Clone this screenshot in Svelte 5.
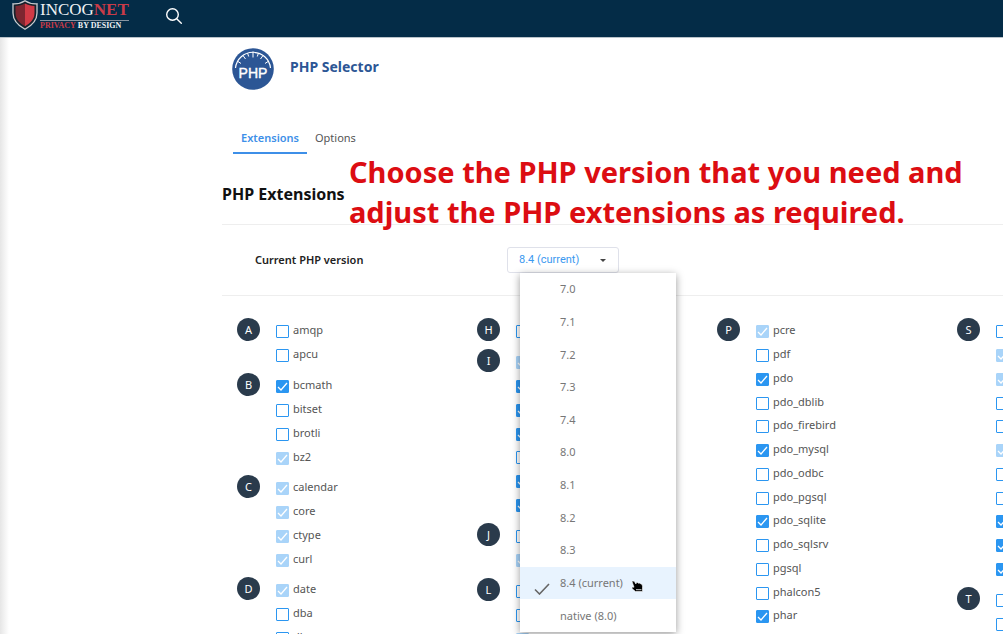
<script>
  // Extension state: 0 = off, 1 = on, 2 = on and locked
  const columns = [
    [
      ['A', [['amqp', 0], ['apcu', 0]]],
      ['B', [['bcmath', 1], ['bitset', 0], ['brotli', 0], ['bz2', 2]]],
      ['C', [['calendar', 2], ['core', 2], ['ctype', 2], ['curl', 2]]],
      ['D', [['date', 2], ['dba', 0], ['dbase', 0]]],
    ],
    [
      ['H', [['http', 0]]],
      ['I', [['iconv', 2], ['igbinary', 1], ['imagick', 1], ['imap', 1], ['inotify', 0], ['intl', 1], ['ioncube_loader', 1]]],
      ['J', [['jsmin', 0], ['json', 2]]],
      ['L', [['ldap', 0], ['leveldb', 0], ['libxml', 2]]],
    ],
    [
      ['P', [
        ['pcre', 2], ['pdf', 0], ['pdo', 1], ['pdo_dblib', 0], ['pdo_firebird', 0], ['pdo_mysql', 1], ['pdo_odbc', 0],
        ['pdo_pgsql', 0], ['pdo_sqlite', 1], ['pdo_sqlsrv', 0], ['pgsql', 0], ['phalcon5', 0], ['phar', 1], ['phpiredis', 0],
      ]],
    ],
    [
      ['S', [
        ['scrypt', 0], ['session', 2], ['simplexml', 2], ['snmp', 0], ['snuffleupagus', 0], ['spl', 2], ['solr', 0],
        ['sourceguardian', 0], ['sqlite3', 1], ['soap', 1], ['sockets', 1],
      ]],
      ['T', [['tideways_xhprof', 0], ['tidy', 0]]],
    ],
  ];
  const versions = ['7.0', '7.1', '7.2', '7.3', '7.4', '8.0', '8.1', '8.2', '8.3', '8.4 (current)', 'native (8.0)'];
  let version = $state('8.4 (current)');
</script>

<div class="page">
  <header>
    <a class="brand" href="#home" aria-label="Incognet, privacy by design">
      <svg class="shield" viewBox="0 0 26 30" aria-hidden="true">
        <path d="M13 .7C9.500 3 5.500 4 1 3.800V13c0 7.500 5 12.500 12 16.300C20 25.500 25 20.500 25 13V3.800C20.500 4 16.500 3 13 .7Z" fill="#17222c" stroke="#c9cdd1" stroke-width="1.300" />
        <path d="M13 3.600C10 5.200 7 6 3.500 6v7c0 6 4 10.200 9.500 13.300Z" fill="#7d2630" />
        <path d="M13 3.600C16 5.200 19 6 22.500 6v7c0 6-4 10.200-9.500 13.300Z" fill="#d13a46" />
      </svg>
      <span class="words">
        <span class="name">INCOG<b>NET</b></span>
        <span class="motto"><b>PRIVACY</b> BY DESIGN</span>
      </span>
    </a>
    <button class="search" aria-label="Search">
      <svg viewBox="0 0 18 18" aria-hidden="true"><circle cx="7.500" cy="7.500" r="5.800" /><path d="M11.700 11.700 16.300 16.300" /></svg>
    </button>
  </header>

  <main>
    <div class="title">
      <svg viewBox="0 0 42 42" aria-hidden="true">
        <circle cx="21" cy="21" r="20.800" fill="#2c5695" />
        <path d="M3.500 20a17.600 17.600 0 0 1 35 0" fill="none" stroke="#fff" stroke-width="1.200" />
        <path d="M6 13.500l3 2M11 7.500l2.500 3.500M15.500 5l1.200 3.500M21 3.500v6M26.500 5l-1.200 3.500M31 7.500l-2.500 3.500M36 13.500l-3 2" stroke="#fff" stroke-width="1" />
        <text x="21" y="30" text-anchor="middle" fill="#fff" stroke="#fff" stroke-width=".4" font-family="Liberation Sans, sans-serif" font-size="14">PHP</text>
      </svg>
      <h1>PHP Selector</h1>
    </div>

    <nav>
      <a class="on" href="#extensions">Extensions</a>
      <a href="#options">Options</a>
    </nav>

    <div class="heading">
      <h2>PHP Extensions</h2>
      <p class="note">Choose the PHP version that you need and<br />adjust the PHP extensions as required.</p>
    </div>

    <div class="current">
      <label for="version">Current PHP version</label>
      <div class="picker">
        <select id="version" bind:value={version}>
          {#each versions as v}<option>{v}</option>{/each}
        </select>
        <svg class="caret" viewBox="0 0 6 3" aria-hidden="true"><path d="M0 0h6L3 3Z" /></svg>
        <ul class="menu" role="listbox" aria-label="PHP versions">
          {#each versions as v}
            <li role="option" aria-selected={v === version} class:chosen={v === version}>
              <button onclick={() => (version = v)}>
                <span class="tick">
                  {#if v === version}
                    <svg viewBox="0 0 16 12" aria-hidden="true"><path d="M1 6.500 5.500 11 15 1" /></svg>
                  {/if}
                </span>
                {v}
              </button>
              {#if v === version}
                <svg class="hand" viewBox="0 0 12 12" aria-hidden="true">
                  <path d="M1 1.500c.8-.8 2-.5 2.500.3L5 4V2.800l1.500-.3 1 .8 1.300-.2.9.9 1.300.3.500 2V11.500H4.500L1 8.500V7l2 .2Z" fill="#000" stroke="#fff" stroke-width=".6" />
                  <path d="M5 9.700h5.500" stroke="#fff" stroke-width=".8" />
                </svg>
              {/if}
            </li>
          {/each}
        </ul>
      </div>
    </div>

    <div class="columns">
      {#each columns as groups}
        <div class="column">
          {#each groups as [letter, items]}
            <section>
              <h3>{letter}</h3>
              <ul>
                {#each items as [name, state]}
                  <li>
                    <label><input type="checkbox" checked={state > 0} disabled={state === 2} />{name}</label>
                  </li>
                {/each}
              </ul>
            </section>
          {/each}
        </div>
      {/each}
    </div>
  </main>
</div>

<style>
  :global(body) { margin: 0; background: #fff; }
  .page {
    min-height: 100vh;
    overflow-x: clip;
    font: 11px/24px "Noto Sans", "Open Sans", sans-serif;
    color: #555;
  }
  ul, h1, h2, h3, p { margin: 0; padding: 0; list-style: none; }
  button { border: 0; padding: 0; background: none; font: inherit; color: inherit; cursor: pointer; }
  a { color: inherit; text-decoration: none; }

  header {
    display: flex;
    height: 37px;
    padding-left: 12px;
    background: #042c47;
    border-bottom: 1px solid #b9c3ca;
    gap: 36px;
  }
  .brand { display: flex; gap: 2px; }
  .shield { width: 26px; height: 30px; }
  .words { display: flex; flex-direction: column; font-family: "Liberation Serif", serif; color: #eef1f3; }
  .name { font-size: 17px; line-height: 20px; border-bottom: 1px solid #8795a1; }
  .name b, .motto b { color: #c93b48; }
  .motto { font: bold 8px/10px "Liberation Serif", serif; }
  .search { width: 18px; height: 18px; margin-top: 7px; }
  .search svg { display: block; fill: none; stroke: #fff; stroke-width: 1.4; stroke-linecap: round; }

  main {
    padding: 10px 0 0 222px;
    background: linear-gradient(to right, #e6e6e6, #fff 9px);
  }
  .title { display: flex; align-items: center; gap: 16px; padding-left: 10px; }
  .title svg { width: 42px; height: 42px; }
  h1 { font-size: 14px; line-height: 20px; font-weight: 700; color: #2c5695; padding-bottom: 4px; }

  nav { display: flex; padding: 34px 0 0 11px; }
  nav a { padding: 2px 8px; border-bottom: 2px solid transparent; }
  nav .on { font-weight: 600; color: #3d8fe8; border-color: #3d8fe8; }

  .heading { position: relative; padding: 28px 0 18px; border-bottom: 1px solid #eee; }
  h2 { font-size: 16px; line-height: 24px; font-weight: 700; color: #111; }
  .note {
    position: absolute;
    left: 127px;
    top: -2px;
    font: 700 29px/40px "Noto Sans", sans-serif;
    color: #dc0d12;
    white-space: nowrap;
  }

  .current { display: flex; align-items: center; height: 70px; padding-left: 33px; border-bottom: 1px solid #eee; }
  .current label { width: 252px; font-weight: 600; color: #222; }
  .picker { position: relative; }
  select {
    display: block;
    width: 112px;
    height: 26px;
    padding: 0 11px;
    appearance: none;
    border: 1px solid #dfe1ea;
    border-radius: 3px;
    background: #fff;
    font: 11px/24px Roboto, sans-serif;
    color: #3b99f0;
  }
  .caret { position: absolute; right: 13px; top: 12px; width: 6px; height: 3px; fill: #444; }
  .menu {
    position: absolute;
    z-index: 2;
    left: 13px;
    top: 26px;
    display: grid;
    grid-auto-rows: 1fr;
    width: 156px;
    height: 359px;
    background: #fff;
    box-shadow: 0 2px 8px rgb(0 0 0 / 40%);
    color: #777;
  }
  .menu li { display: flex; align-items: center; min-height: 0; }
  .menu button { display: flex; align-items: center; }
  .tick { width: 26px; padding-left: 14px; }
  .tick svg { display: block; width: 16px; height: 12px; margin-top: 12px; fill: none; stroke: #666; stroke-width: 1.6; }
  .chosen { background: #e8f3fe; }
  .hand { width: 12px; height: 12px; margin: 6px 0 0 8px; }

  .columns { display: grid; grid-template-columns: repeat(4, 240px); padding-top: 22px; }
  .column { display: flex; flex-direction: column; gap: 7px; }
  section { display: flex; align-items: flex-start; gap: 16px; padding-left: 15px; }
  h3 {
    width: 23px;
    height: 23px;
    border-radius: 50%;
    background: #2a3b4c;
    color: #fff;
    font-size: 11px;
    line-height: 23px;
    font-weight: 400;
    text-align: center;
  }
  section li { height: 24px; }
  section li:nth-child(4n) { height: 23px; }
  section label { display: flex; gap: 4px; }
  input {
    box-sizing: border-box;
    appearance: none;
    width: 13px;
    height: 13px;
    margin: 7px 0 0;
    border: 1px solid #2b96f1;
    border-radius: 1px;
    background: #fff;
  }
  input:checked {
    background: #2b96f1 url("data:image/svg+xml,%3Csvg xmlns='http://www.w3.org/2000/svg' viewBox='0 0 11 11'%3E%3Cpath d='M1 6l3 3 6-7' fill='none' stroke='%23fff' stroke-width='1.300'/%3E%3C/svg%3E");
  }
  input:disabled { opacity: 0.4; }
</style>
